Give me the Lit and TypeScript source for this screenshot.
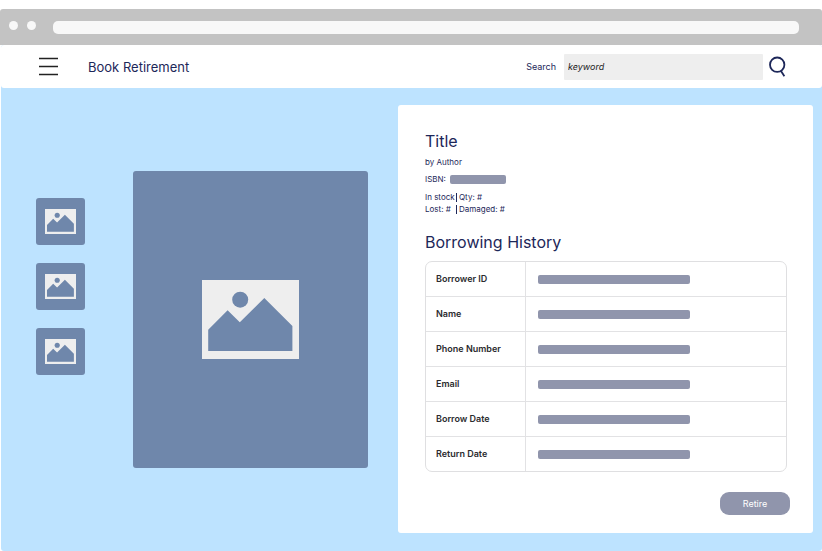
import { LitElement, html, css } from "lit";
import { customElement, property } from "lit/decorators.js";

@customElement("picture-icon")
class PictureIcon extends LitElement {
  static styles = css`
    :host { display: block; }
    .icon { display: block; width: 100%; height: auto; }
  `;

  render() {
    return html`<svg class="icon" viewBox="0 0 97 79" aria-hidden="true">
      <rect width="97" height="79" fill="#eeeeee" />
      <circle cx="38.2" cy="19.7" r="8" fill="#6f87ab" />
      <path d="M6.2 49.7L25.6 30.3L37.8 42.3L62.3 18L90.4 46V71H6.2Z" fill="#6f87ab" />
    </svg>`;
  }
}

@customElement("browser-bar")
class BrowserBar extends LitElement {
  static styles = css`
    :host {
      display: flex;
      align-items: center;
      height: 36px;
      box-sizing: border-box;
      padding: 0 23px 0 9px;
      border-radius: 3px 3px 0 0;
      background: #c3c3c3;
    }
    .dots { display: flex; gap: 9px; margin-right: 17px; padding-bottom: 4px; }
    .dot { width: 9px; height: 9px; border-radius: 50%; background: #f8f8f8; }
    .address { flex: 1; height: 13px; border-radius: 5px; background: #f8f8f8; }
  `;

  render() {
    return html`
      <div class="dots"><span class="dot"></span><span class="dot"></span></div>
      <div class="address"></div>
    `;
  }
}

@customElement("detail-table")
class DetailTable extends LitElement {
  static styles = css`
    :host { display: block; }
    .table {
      width: 100%;
      border: 1px solid #dfdfe1;
      border-radius: 7px;
      border-spacing: 0;
      table-layout: fixed;
    }
    .name, .value { height: 35px; box-sizing: border-box; border-bottom: 1px solid #e2e2e4; }
    .name {
      width: 100px;
      padding: 0 0 0 10px;
      border-right: 1px solid #e2e2e4;
      color: #2b2b2e;
      font-size: 9px;
      line-height: 12px;
      font-weight: 600;
      text-align: left;
    }
    .value { padding: 0 12px; }
    .row:last-child > * { height: 34px; border-bottom: 0; }
    .bar { display: block; width: 152px; max-width: 100%; height: 9px; border-radius: 2px; background: #9095ac; }
  `;

  @property({ attribute: false }) names: string[] = [];

  render() {
    return html`<table class="table">
      <tbody>
        ${this.names.map(
          (name) => html`<tr class="row">
            <th class="name" scope="row">${name}</th>
            <td class="value"><span class="bar"></span></td>
          </tr>`
        )}
      </tbody>
    </table>`;
  }
}

@customElement("app-root")
class AppRoot extends LitElement {
  static styles = css`
    :host {
      display: flex;
      flex-direction: column;
      min-height: 100vh;
      box-sizing: border-box;
      padding-top: 9px;
      background: #ffffff;
      color: #1d2759;
      font-family: Inter, "Liberation Sans", sans-serif;
      font-size: 8px;
      line-height: 12px;
    }
    .page {
      flex: 1;
      display: flex;
      flex-direction: column;
      margin-left: 1px;
      border-radius: 3px;
      background: #bde3ff;
    }
    .header {
      display: flex;
      align-items: center;
      height: 43px;
      box-sizing: border-box;
      padding: 0 35px 0 38px;
      border-radius: 3px;
      background: #ffffff;
    }
    .menu, .find {
      display: block;
      padding: 0;
      border: 0;
      background: none;
      cursor: pointer;
    }
    .glyph { display: block; }
    .heading { margin: 0 0 0 30px; font-size: 13px; line-height: 18px; font-weight: 400; }
    .search { display: flex; align-items: center; margin-left: auto; }
    .label { margin-right: 8px; font-size: 9px; }
    .input {
      width: 199px;
      height: 26px;
      box-sizing: border-box;
      margin-right: 6px;
      padding: 0 4px;
      border: 0;
      border-radius: 1px;
      background: #eeeeee;
      font: italic 9px/12px Inter, "Liberation Sans", sans-serif;
    }
    .input::placeholder { color: #222222; opacity: 1; }
    .main {
      flex: 1;
      display: grid;
      grid-template-columns: 49px minmax(0, 313fr) minmax(0, 415fr);
      align-items: start;
      padding: 17px 9px 18px 35px;
    }
    .thumbs { display: flex; flex-direction: column; gap: 18px; margin-top: 93px; }
    .thumb {
      display: grid;
      place-items: center;
      height: 47px;
      padding: 0;
      border: 0;
      border-radius: 3px;
      background: #6f87ab;
      cursor: pointer;
    }
    .thumb-icon { width: 31px; }
    .cover {
      display: grid;
      place-items: center;
      aspect-ratio: 235 / 297;
      margin: 66px 30px 0 48px;
      border-radius: 3px;
      background: #6f87ab;
    }
    .cover-icon { width: 97px; }
    .panel {
      display: flex;
      flex-direction: column;
      box-sizing: border-box;
      padding: 26px 23px 18px 27px;
      border-radius: 3px;
      background: #ffffff;
    }
    .title { margin: 0; font-size: 16px; line-height: 20px; font-weight: 400; }
    .author { margin: 5px 0 0; }
    .isbn { display: flex; align-items: center; gap: 4px; margin-top: 5px; }
    .isbn-bar { width: 56px; height: 9px; border-radius: 2px; background: #9095ac; }
    .stock {
      display: grid;
      grid-template-columns: 31px 1fr;
      margin-top: 6px;
    }
    .stock-item { white-space: nowrap; }
    .split { display: flex; align-items: center; gap: 2px; }
    .split::before { content: ""; width: 1px; height: 9px; background: #1d2759; }
    .history { margin-top: 17px; }
    .details { margin: 9px 3px 0 0; }
    .retire {
      align-self: flex-end;
      width: 70px;
      height: 23px;
      margin-top: 20px;
      padding: 0;
      border: 0;
      border-radius: 9px;
      background: #9095ac;
      color: #ffffff;
      font: 9px/12px Inter, "Liberation Sans", sans-serif;
      cursor: pointer;
    }
  `;

  private names = ["Borrower ID", "Name", "Phone Number", "Email", "Borrow Date", "Return Date"];

  render() {
    return html`
      <browser-bar></browser-bar>
      <div class="page">
        <header class="header">
          <button class="menu" type="button" aria-label="Menu">
            <svg class="glyph" width="19" height="19" viewBox="0 0 19 19" fill="none" stroke="#222222">
              <path d="M0 1.5H19M0 9.5H19M0 17.5H19" stroke-width="1.3" />
            </svg>
          </button>
          <h1 class="heading">Book Retirement</h1>
          <form class="search" @submit=${(e: Event) => e.preventDefault()}>
            <label class="label" for="keyword">Search</label>
            <input class="input" id="keyword" type="text" placeholder="keyword" />
            <button class="find" type="submit" aria-label="Find">
              <svg class="glyph" width="18" height="21" viewBox="0 0 18 21" fill="none" stroke="#1d2759">
                <circle cx="8.2" cy="8.7" r="7.2" stroke-width="1.8" />
                <path d="M12 15L15.4 20.2" stroke-width="1.8" />
              </svg>
            </button>
          </form>
        </header>
        <main class="main">
          <div class="thumbs">
            ${[1, 2, 3].map(
              (n) => html`<button class="thumb" type="button" aria-label="Picture ${n}">
                <picture-icon class="thumb-icon"></picture-icon>
              </button>`
            )}
          </div>
          <div class="cover"><picture-icon class="cover-icon"></picture-icon></div>
          <section class="panel">
            <h2 class="title">Title</h2>
            <p class="author">by Author</p>
            <div class="isbn"><span>ISBN:</span><span class="isbn-bar"></span></div>
            <div class="stock">
              <span class="stock-item">In stock</span><span class="stock-item split">Qty: #</span>
              <span class="stock-item">Lost: #</span><span class="stock-item split">Damaged: #</span>
            </div>
            <h2 class="title history">Borrowing History</h2>
            <detail-table class="details" .names=${this.names}></detail-table>
            <button class="retire" type="button">Retire</button>
          </section>
        </main>
      </div>
    `;
  }
}
